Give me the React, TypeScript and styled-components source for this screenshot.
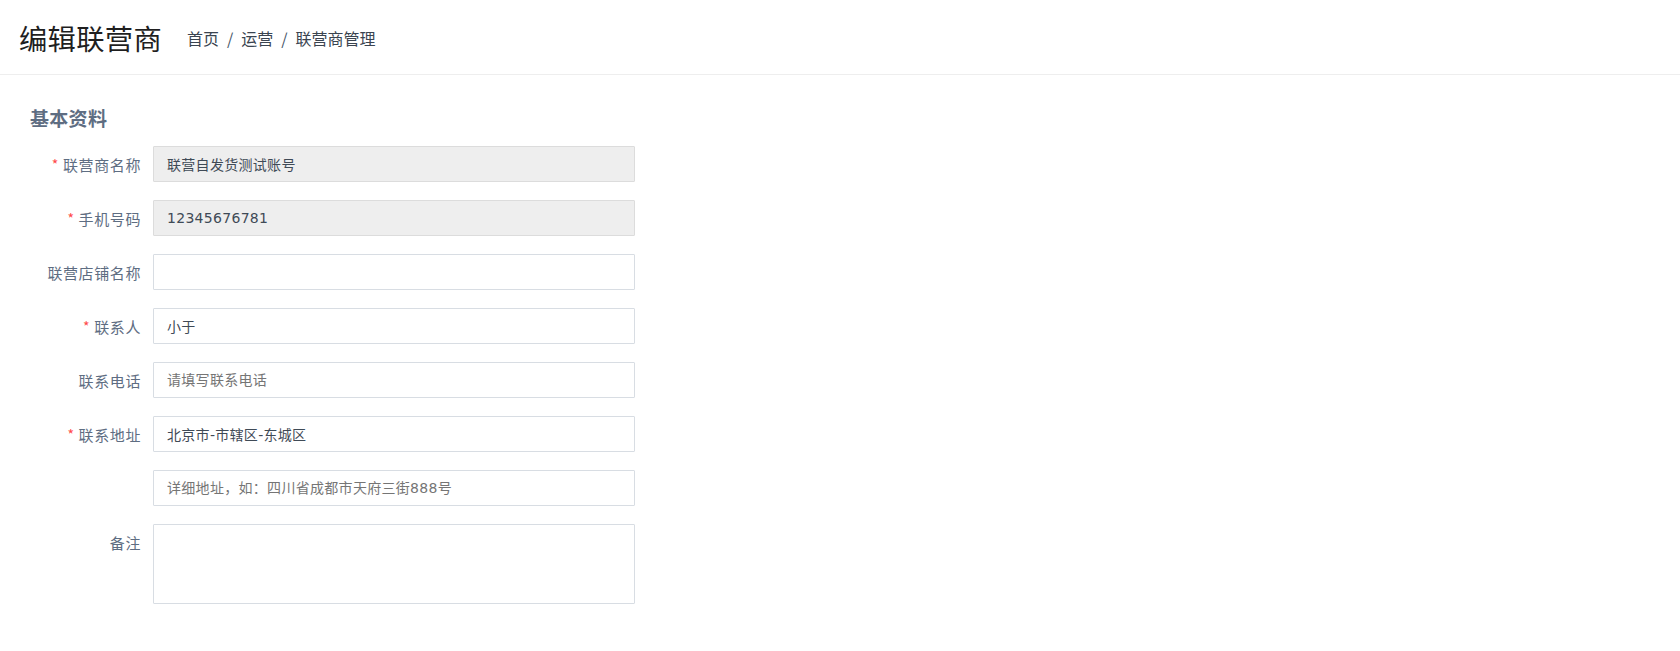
import React from 'react';
import styled, { createGlobalStyle } from 'styled-components';

const GlobalStyle = createGlobalStyle`
    html, body {
        margin: 0;
        padding: 0;
        background: #ffffff;
        font-family: "Liberation Sans", "Noto Sans CJK SC", sans-serif;
    }
    * {
        box-sizing: border-box;
    }
`;

type Field = {
    label?: string;
    required?: boolean;
    value?: string;
    placeholder?: string;
    disabled?: boolean;
    multiline?: boolean;
};

const fields: Field[] = [
    { label: '联营商名称', required: true, value: '联营自发货测试账号', disabled: true },
    { label: '手机号码', required: true, value: '12345676781', disabled: true },
    { label: '联营店铺名称', value: '' },
    { label: '联系人', required: true, value: '小于' },
    { label: '联系电话', placeholder: '请填写联系电话' },
    { label: '联系地址', required: true, value: '北京市-市辖区-东城区' },
    { placeholder: '详细地址，如：四川省成都市天府三街888号' },
    { label: '备注', multiline: true },
];

const App = () => {
    return (
        <Page>
            <GlobalStyle />
            <Header>
                <Title>编辑联营商</Title>
                <Breadcrumb>
                    <span>首页</span>
                    <Sep>/</Sep>
                    <span>运营</span>
                    <Sep>/</Sep>
                    <span>联营商管理</span>
                </Breadcrumb>
            </Header>
            <Section>
                <SectionTitle>基本资料</SectionTitle>
                <Form>
                    {fields.map((f, i) => (
                        <Row key={i}>
                            <Label>
                                {f.required && <Star>*</Star>}
                                {f.label}
                            </Label>
                            {f.multiline ? (
                                <TextArea />
                            ) : (
                                <Input
                                    $disabled={f.disabled}
                                    readOnly
                                    value={f.value ?? ''}
                                    placeholder={f.placeholder}
                                />
                            )}
                        </Row>
                    ))}
                </Form>
            </Section>
        </Page>
    );
};

const Page = styled.div`
    width: 100%;
    min-height: 651px;
    background: #fff;
`;

const Header = styled.div`
    display: flex;
    align-items: center;
    height: 75px;
    padding: 0 19px;
    border-bottom: 1px solid #eeeeee;
`;

const Title = styled.h1`
    margin: 0 25px 0 0;
    font-size: 28.3px;
    font-weight: 400;
    color: #1f1f1f;
    font-family: "Noto Sans CJK SC", sans-serif;
    letter-spacing: 0.3px;
`;

const Breadcrumb = styled.div`
    display: flex;
    align-items: center;
    font-size: 16px;
    color: #3a4450;
    font-family: "Noto Sans CJK SC", sans-serif;
    margin-top: 2px;
`;

const Sep = styled.span`
    margin: 0 8px;
    color: #48576a;
`;

const Section = styled.div`
    padding: 29px 30px 0;
`;

const SectionTitle = styled.h2`
    margin: 0 0 14px 0;
    font-size: 19px;
    font-weight: 700;
    color: #5e6d82;
    font-family: "Noto Sans CJK SC", sans-serif;
    line-height: 28px;
    letter-spacing: 0.3px;
`;

const Form = styled.div`
    display: flex;
    flex-direction: column;
    gap: 18px;
`;

const Row = styled.div`
    display: flex;
    align-items: flex-start;
`;

const Label = styled.label`
    width: 111px;
    height: 36px;
    margin-right: 12px;
    display: flex;
    align-items: center;
    justify-content: flex-end;
    font-size: 15px;
    color: #5e6d82;
    font-family: "Noto Sans CJK SC", sans-serif;
    letter-spacing: 0.6px;
`;

const Star = styled.span`
    color: #ff4949;
    margin-right: 4px;
    font-size: 14px;
`;

const Input = styled.input<{ $disabled?: boolean }>`
    width: 482px;
    height: 36px;
    padding: 0 13px;
    border: 1px solid ${p => (p.$disabled ? '#dcdcdc' : '#d8dde3')};
    background: ${p => (p.$disabled ? '#eeeeee' : '#ffffff')};
    border-radius: 1px;
    font-size: 14px;
    letter-spacing: 0.3px;
    color: #3f4a56;
    font-family: "DejaVu Sans", "Noto Sans CJK SC", sans-serif;
    outline: none;

    ::placeholder {
        color: #a3aab3;
    }
`;

const TextArea = styled.textarea`
    width: 482px;
    height: 80px;
    padding: 8px 13px;
    border: 1px solid #d8dde3;
    border-radius: 1px;
    resize: none;
    font-size: 14px;
    font-family: "DejaVu Sans", "Noto Sans CJK SC", sans-serif;
    outline: none;
`;

export default App;
